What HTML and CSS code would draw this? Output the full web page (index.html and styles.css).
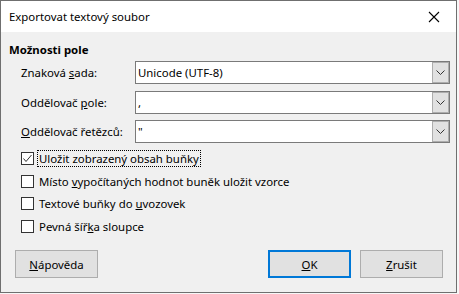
FILE: index.html
```html
<html>
<head>
    <link rel="stylesheet" href="styles.css">
    <title>Exportovat textový soubor</title>
</head>
<body>
    <div class="window">
        <div class="titlebar">
            <span class="title">Exportovat textový soubor</span>
            <svg class="close" width="12" height="12" viewBox="0 0 12 12">
                <path d="M1 1 L11 11 M11 1 L1 11" stroke="#000" stroke-width="1.1" fill="none"/>
            </svg>
        </div>
        <div class="content">
            <div class="section">Možnosti pole</div>
            <div class="fields">
                <div class="row">
                    <label>Znaková <u>s</u>ada:</label>
                    <div class="combo"><span>Unicode (UTF-8)</span><div class="drop"><svg width="9" height="5" viewBox="0 0 9 5"><path d="M0.5 0.5 L4.5 4.5 L8.5 0.5" stroke="#333" fill="none"/></svg></div></div>
                </div>
                <div class="row">
                    <label>Oddělovač <u>p</u>ole:</label>
                    <div class="combo"><span>,</span><div class="drop"><svg width="9" height="5" viewBox="0 0 9 5"><path d="M0.5 0.5 L4.5 4.5 L8.5 0.5" stroke="#333" fill="none"/></svg></div></div>
                </div>
                <div class="row">
                    <label><u>O</u>ddělovač řetězců:</label>
                    <div class="combo"><span>"</span><div class="drop"><svg width="9" height="5" viewBox="0 0 9 5"><path d="M0.5 0.5 L4.5 4.5 L8.5 0.5" stroke="#333" fill="none"/></svg></div></div>
                </div>
            </div>
            <div class="checks">
                <div class="check">
                    <span class="box"><svg width="11" height="11" viewBox="0 0 11 11"><path d="M1.5 5.5 L4 8.5 L9.5 2" stroke="#333" fill="none"/></svg></span>
                    <span class="focus">Uložit zobrazený obsah buňky</span>
                </div>
                <div class="check">
                    <span class="box"></span>
                    <span>Místo <u>v</u>ypočítaných hodnot buněk uložit vzorce</span>
                </div>
                <div class="check">
                    <span class="box"></span>
                    <span>Textové buňky do <u>u</u>vozovek</span>
                </div>
                <div class="check">
                    <span class="box"></span>
                    <span>Pevná šíř<u>k</u>a sloupce</span>
                </div>
            </div>
            <div class="buttons">
                <button><u>N</u>ápověda</button>
                <div class="spacer"></div>
                <button class="default"><u>O</u>K</button>
                <button><u>Z</u>rušit</button>
            </div>
        </div>
    </div>
</body>
</html>
```

FILE: styles.css
```css
body
{
    margin: 0;
    background: #f7f7f7;
    font-family: "Noto Sans", sans-serif;
    font-size: 11.4px;
    color: #000;
}
.window
{
    width: 455px;
    height: 291px;
    border: 1px solid #6f6f6f;
    background: #f0f0f0;
    display: flex;
    flex-direction: column;
}
.titlebar
{
    height: 31px;
    background: #fff;
    display: flex;
    align-items: center;
    padding: 0 16px 0 8px;
}
.title
{
    flex: 1;
}
.close
{
    display: block;
}
.content
{
    flex: 1;
    display: flex;
    flex-direction: column;
    padding: 10px 0 0 0;
}
.section
{
    font-weight: bold;
    padding-left: 8px;
    line-height: 16px;
}
.fields
{
    display: flex;
    flex-direction: column;
    gap: 6.5px;
    padding: 3px 0 0 20px;
}
.row
{
    display: flex;
    align-items: center;
    height: 23px;
}
.row label
{
    width: 114px;
}
.combo
{
    width: 311px;
    height: 21px;
    border: 1px solid #7a7a7a;
    background: #fff;
    display: flex;
    align-items: center;
    padding-left: 2px;
}
.combo span
{
    flex: 1;
}
.drop
{
    width: 15px;
    height: 19px;
    background: #e1e1e1;
    border: 1px solid #adadad;
    display: flex;
    align-items: center;
    justify-content: center;
}
.drop svg
{
    display: block;
}
.checks
{
    display: flex;
    flex-direction: column;
    padding: 4px 0 0 20px;
}
.check
{
    display: flex;
    align-items: center;
    height: 22.7px;
}
.box
{
    width: 11px;
    height: 11px;
    border: 1px solid #333;
    background: #fff;
    margin-right: 5px;
    display: flex;
}
.focus
{
    outline: 1px dotted #000;
    outline-offset: 0;
    padding: 0 1px;
    margin-left: -1px;
}
.buttons
{
    display: flex;
    padding: 0 13px 0 14px;
    margin-top: auto;
    margin-bottom: 14px;
}
.spacer
{
    flex: 1;
}
button
{
    width: 83px;
    height: 28px;
    background: #e1e1e1;
    border: 1px solid #adadad;
    font-family: "Noto Sans", sans-serif;
    font-size: 11.4px;
    padding: 0;
    margin-left: 9px;
}
button:first-child
{
    margin-left: 0;
}
button.default
{
    border: 2px solid #0078d7;
}
```
